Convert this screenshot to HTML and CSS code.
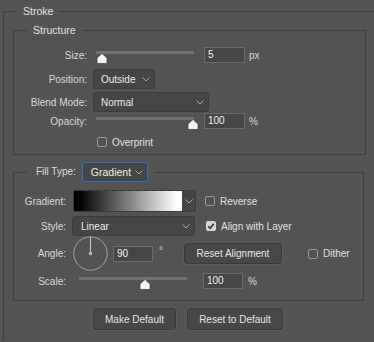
FILE: index.html
```html
<!DOCTYPE html>
<html>
<head>
<meta charset="utf-8">
<link rel="stylesheet" href="styles.css">
</head>
<body>
<fieldset class="group outer">
  <legend class="legend">Stroke</legend>

  <fieldset class="group structure">
    <legend class="legend">Structure</legend>

    <div class="row r-size">
      <span class="lbl s-lbl">Size:</span>
      <div class="slider s-slider"><div class="track"></div>
        <svg class="thumb" style="left:0px" width="12" height="11" viewBox="0 0 12 11"><path d="M6 0.5 L11 5 L11 9.5 Q11 10.5 10 10.5 L2 10.5 Q1 10.5 1 9.5 L1 5 Z" fill="#f4f4f4" stroke="#2e2e2e" stroke-width="0.6"/></svg>
      </div>
      <div class="field s-field">5</div>
      <span class="unit">px</span>
    </div>

    <div class="row r-pos">
      <span class="lbl s-lbl">Position:</span>
      <div class="select pos-sel"><span>Outside</span><svg class="chev" width="8" height="5" viewBox="0 0 8 5"><polyline points="0.5,0.5 4,4 7.5,0.5" fill="none" stroke="#a9a9a9" stroke-width="1"/></svg></div>
    </div>

    <div class="row r-blend">
      <span class="lbl s-lbl">Blend Mode:</span>
      <div class="select blend-sel"><span>Normal</span><svg class="chev" width="8" height="5" viewBox="0 0 8 5"><polyline points="0.5,0.5 4,4 7.5,0.5" fill="none" stroke="#a9a9a9" stroke-width="1"/></svg></div>
    </div>

    <div class="row r-op">
      <span class="lbl s-lbl">Opacity:</span>
      <div class="slider s-slider"><div class="track"></div>
        <svg class="thumb" style="left:91px" width="12" height="11" viewBox="0 0 12 11"><path d="M6 0.5 L11 5 L11 9.5 Q11 10.5 10 10.5 L2 10.5 Q1 10.5 1 9.5 L1 5 Z" fill="#f4f4f4" stroke="#2e2e2e" stroke-width="0.6"/></svg>
      </div>
      <div class="field s-field">100</div>
      <span class="unit">%</span>
    </div>

    <div class="row r-over">
      <span class="check"></span>
      <span class="ctext">Overprint</span>
    </div>
  </fieldset>

  <fieldset class="group fill">
    <legend class="legend fill-legend">
      <span class="ft-lbl">Fill Type:</span>
      <span class="select ft-sel"><span>Gradient</span><svg class="chev" width="8" height="5" viewBox="0 0 8 5"><polyline points="0.5,0.5 4,4 7.5,0.5" fill="none" stroke="#a9a9a9" stroke-width="1"/></svg></span>
    </legend>

    <div class="row r-grad">
      <span class="lbl f-lbl">Gradient:</span>
      <div class="gradbox"><div class="swatch"></div><div class="gradarrow"><svg width="8" height="5" viewBox="0 0 8 5"><polyline points="0.5,0.5 4,4 7.5,0.5" fill="none" stroke="#a9a9a9" stroke-width="1"/></svg></div></div>
      <span class="check rev-check"></span>
      <span class="ctext">Reverse</span>
    </div>

    <div class="row r-style">
      <span class="lbl f-lbl">Style:</span>
      <div class="select style-sel"><span>Linear</span><svg class="chev" width="8" height="5" viewBox="0 0 8 5"><polyline points="0.5,0.5 4,4 7.5,0.5" fill="none" stroke="#a9a9a9" stroke-width="1"/></svg></div>
      <span class="check checked align-check"><svg width="8" height="8" viewBox="0 0 8 8"><polyline points="1.2,4.2 3.2,6.2 6.8,1.8" fill="none" stroke="#333" stroke-width="1.6"/></svg></span>
      <span class="ctext">Align with Layer</span>
    </div>

    <div class="row r-angle">
      <span class="lbl f-lbl">Angle:</span>
      <svg class="dial" width="36" height="36" viewBox="0 0 36 36"><circle cx="18" cy="18" r="17.2" fill="none" stroke="#a4a4a4" stroke-width="1"/><line x1="18" y1="18" x2="18" y2="1" stroke="#bdbdbd" stroke-width="1.2"/><circle cx="18" cy="18" r="1.8" fill="#bdbdbd"/></svg>
      <div class="field a-field">90</div>
      <span class="deg">°</span>
      <button class="btn reset-align">Reset Alignment</button>
      <span class="check dither-check"></span>
      <span class="ctext">Dither</span>
    </div>

    <div class="row r-scale">
      <span class="lbl f-lbl">Scale:</span>
      <div class="slider sc-slider"><div class="track"></div>
        <svg class="thumb" style="left:60px" width="12" height="11" viewBox="0 0 12 11"><path d="M6 0.5 L11 5 L11 9.5 Q11 10.5 10 10.5 L2 10.5 Q1 10.5 1 9.5 L1 5 Z" fill="#f4f4f4" stroke="#2e2e2e" stroke-width="0.6"/></svg>
      </div>
      <div class="field sc-field">100</div>
      <span class="unit">%</span>
    </div>
  </fieldset>

  <div class="buttons">
    <button class="btn make-def">Make Default</button>
    <button class="btn reset-def">Reset to Default</button>
  </div>
</fieldset>
</body>
</html>
```

FILE: styles.css
```css
html, body {
  margin: 0;
  padding: 0;
  background: #535353;
  overflow: hidden;
}
body {
  width: 374px;
  height: 342px;
  padding-top: 4px;
  box-sizing: border-box;
  font-family: "Liberation Sans", Arial, sans-serif;
  font-size: 10px;
  color: #d8d8d8;
}
.group {
  margin: 0;
  padding: 0;
  border: 1px solid #3e3e3e;
  box-sizing: border-box;
  min-width: 0;
}
.legend {
  margin-left: 13px;
  padding: 0 6px;
  line-height: 15px;
  height: 15px;
  color: #e2e2e2;
  font-size: 10.5px;
}
.outer {
  margin-left: 3px;
  width: 371px;
  border-right: none;
  border-bottom: none;
  padding-bottom: 11px;
}
.structure {
  margin: 4px 0 0 9px;
  width: 353px;
  padding-bottom: 7px;
}
.fill {
  margin: 7px 0 0 9px;
  width: 351px;
  padding-bottom: 11px;
}
.row {
  display: flex;
  align-items: center;
}
.lbl {
  text-align: right;
  flex: none;
}
.s-lbl { width: 73px; }
.f-lbl { width: 52px; }

.r-size { height: 16px; margin-top: 9px; }
.r-pos { height: 20px; margin-top: 6px; }
.r-blend { height: 20px; margin-top: 3px; }
.r-op { height: 16px; margin-top: 1px; }
.r-over { height: 10px; margin-top: 8px; padding-left: 83px; }

.slider {
  position: relative;
  height: 16px;
  flex: none;
}
.s-slider { width: 98px; margin-left: 9px; }
.sc-slider { width: 108px; margin-left: 13px; }
.track {
  margin-top: 4px;
  height: 3px;
  background: #727272;
}
.thumb {
  position: absolute;
  top: 6px;
  display: block;
}

.field {
  flex: none;
  height: 16px;
  box-sizing: border-box;
  border: 1px solid #6a6a6a;
  background: #464646;
  color: #f2f2f2;
  padding-left: 3px;
  line-height: 14px;
}
.s-field { width: 41px; margin-left: 10px; }
.a-field { width: 40px; margin-left: 5px; }
.sc-field { width: 40px; margin-left: 16px; }
.unit { margin-left: 4px; }
.r-scale .unit { margin-left: 5px; }

.select {
  flex: none;
  display: flex;
  align-items: center;
  justify-content: space-between;
  box-sizing: border-box;
  height: 20px;
  border: 1px solid #3c3c3c;
  border-radius: 3px;
  background: #454545;
  color: #ececec;
  padding: 0 4px 0 7px;
}
.chev { display: block; }
.pos-sel { width: 62px; margin-left: 6px; }
.blend-sel { width: 116px; margin-left: 6px; }
.style-sel { width: 123px; margin-left: 6px; padding-left: 8px; }

.fill-legend {
  height: 20px;
  line-height: 20px;
  display: flex;
  align-items: center;
  padding: 0 6px 0 9px;
}
.ft-lbl { font-size: 10px; color: #dcdcdc; }
.ft-sel {
  width: 66px;
  margin-left: 6px;
  border: 1px solid #2f6fc0;
  border-radius: 2px;
  padding-left: 8px;
  font-size: 10.5px;
}

.check {
  flex: none;
  width: 10px;
  height: 10px;
  box-sizing: border-box;
  border: 1px solid #9a9a9a;
  border-radius: 2px;
  display: flex;
  align-items: center;
  justify-content: center;
}
.check.checked {
  background: #d6d6d6;
  border-color: #d6d6d6;
}
.check svg { display: block; }
.ctext { margin-left: 5px; color: #e0e0e0; }

.r-grad { height: 22px; margin-top: 8px; }
.gradbox {
  flex: none;
  margin-left: 7px;
  width: 123px;
  height: 22px;
  box-sizing: border-box;
  border: 1px solid #3c3c3c;
  border-radius: 2px;
  background: #454545;
  display: flex;
}
.swatch {
  width: 108px;
  background: linear-gradient(to right, #000 0%, #000 5%, #fff 95%, #fff 100%);
}
.gradarrow {
  flex: 1;
  display: flex;
  align-items: center;
  justify-content: center;
}
.gradarrow svg { display: block; }
.rev-check { margin-left: 9px; }

.r-style { height: 20px; margin-top: 4px; }
.align-check { margin-left: 11px; }

.r-angle { height: 35px; margin-top: 0; }
.dial { flex: none; margin-left: 7px; display: block; width: 35px; height: 35px; }
.deg { width: 31px; padding-left: 6px; box-sizing: border-box; flex: none; margin-bottom: 6px; }
.btn {
  font-family: "Liberation Sans", Arial, sans-serif;
  font-size: 10px;
  color: #e6e6e6;
  background: #474747;
  border: 1px solid #3a3a3a;
  border-radius: 3px;
  box-shadow: 0 0 0 1px #5b5b5b;
  padding: 0;
  margin: 0;
  flex: none;
}
.reset-align { width: 98px; height: 21px; }
.dither-check { margin-left: 26px; }

.r-scale { height: 16px; margin-top: 2px; }

.buttons {
  display: flex;
  margin: 7px 0 0 89px;
  gap: 11px;
}
.make-def { width: 83px; height: 22px; }
.reset-def { width: 96px; height: 22px; }
```
